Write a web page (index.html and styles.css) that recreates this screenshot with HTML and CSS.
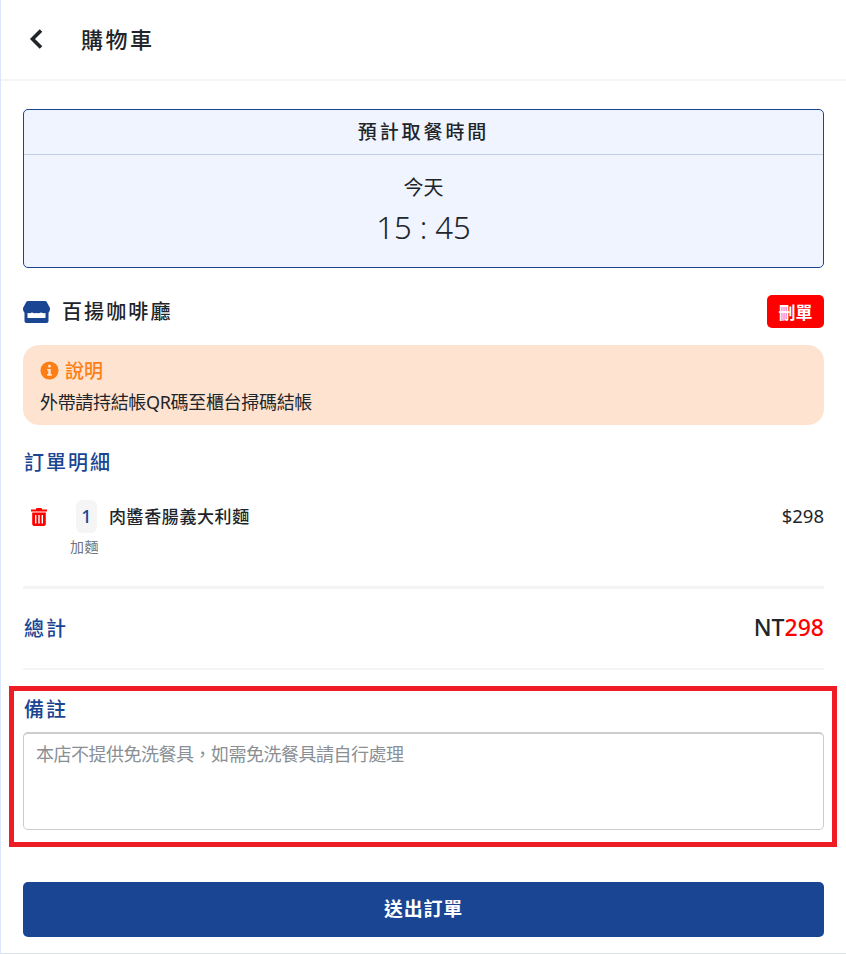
FILE: index.html
```html
<!DOCTYPE html>
<html lang="zh-Hant">
  <head>
    <meta charset="UTF-8" />
    <meta name="viewport" content="width=device-width, initial-scale=1.0" />
    <title>購物車</title>
    <link rel="stylesheet" href="styles.css">
  </head>
  <body>
    <div class="page">
      <header class="topbar">
        <svg class="back-icon" viewBox="0 0 14 20" width="14" height="20">
          <path d="M12 1.500 L3.500 10 L12 18.500" fill="none" stroke="#212529" stroke-width="3.600" />
        </svg>
        <h1 class="title">購物車</h1>
      </header>

      <main class="content">
        <section class="pickup">
          <div class="pickup-head">預計取餐時間</div>
          <div class="pickup-body">
            <div class="pickup-day">今天</div>
            <div class="pickup-time">15 : 45</div>
          </div>
        </section>

        <div class="shop-row">
          <svg class="shop-icon" viewBox="0 0 27 22" width="27" height="22">
            <path fill="#1a4592" fill-rule="evenodd" d="M5.500 0 H21.500 C23 0 23.600 .6 24 1.400 L27 7 V8 C27 10 25.500 11.800 25.500 11.800 V20 C25.500 21.200 24.700 22 23.500 22 H3.500 C2.300 22 1.500 21.200 1.500 20 V11.800 C1.500 11.800 0 10 0 8 V7 L3 1.400 C3.400 .6 4 0 5.500 0 Z M4.500 12 V17 H22.500 V12 Q20 12.500 18 11.500 Q16 12.500 13.500 12 Q11 12.500 9 11.500 Q7 12.500 4.500 12 Z" />
          </svg>
          <span class="shop-name">百揚咖啡廳</span>
          <button class="cancel-btn">刪單</button>
        </div>

        <div class="notice">
          <div class="notice-title">
            <svg viewBox="0 0 20 20" width="19" height="19">
              <circle cx="10" cy="10" r="9.500" fill="#fd7e14" />
              <rect x="8.600" y="4" width="2.800" height="2.800" rx="1" fill="#ffe3d1" />
              <path fill="#ffe3d1" d="M7.500 8.300 H11.300 V13.800 H12.500 V15.500 H7.500 V13.800 H8.700 V10 H7.500 Z" />
            </svg>
            <span>說明</span>
          </div>
          <div class="notice-text">外帶請持結帳QR碼至櫃台掃碼結帳</div>
        </div>

        <h2 class="section-title">訂單明細</h2>

        <div class="order-item">
          <svg class="trash-icon" viewBox="0 0 16 18" width="16" height="18">
            <path fill="#ff0000" d="M5.500 0 H10.500 L11.200 1.500 H16 V3.500 H0 V1.500 H4.800 Z" />
            <path fill="#ff0000" fill-rule="evenodd" d="M1.200 4.500 H14.800 V16 C14.800 17.200 14 18 12.800 18 H3.200 C2 18 1.200 17.200 1.200 16 Z M4 7 V15.500 H5.400 V7 Z M7.300 7 V15.500 H8.700 V7 Z M10.600 7 V15.500 H12 V7 Z" />
          </svg>
          <div class="qty">1</div>
          <div class="item-name">肉醬香腸義大利麵</div>
          <div class="item-price">$298</div>
        </div>
        <div class="item-option">加麵</div>

        <div class="total-row">
          <span class="section-title total-label">總計</span>
          <span class="total-price">NT<span class="red">298</span></span>
        </div>

        <div class="remark">
          <h2 class="section-title">備註</h2>
          <textarea class="remark-input" placeholder="本店不提供免洗餐具，如需免洗餐具請自行處理"></textarea>
        </div>

        <button class="submit-btn">送出訂單</button>
      </main>

      <div class="highlight"></div>
    </div>
  </body>
</html>
```

FILE: styles.css
```css
:root {
  --blue: #1a4592;
  --dark: #212529;
  --line: #f3f4f6;
}
* {
  box-sizing: border-box;
}
html,
body {
  margin: 0;
  height: 100%;
}
body {
  font-family: "Noto Sans", "Noto Sans CJK TC", sans-serif;
  color: var(--dark);
  background: #fff;
  overflow: hidden;
}

.page {
  position: relative;
  width: 846px;
  height: 954px;
  border-left: 1px solid #dbe7fb;
  border-bottom: 1px solid #dee2e6;
}

.topbar {
  display: flex;
  align-items: center;
  height: 81px;
  padding: 0 0 2px 28px;
  border-bottom: 2px solid var(--line);
}
.back-icon {
  margin-right: 39px;
}
.title {
  margin: -1px 0 0 -1px;
  font-size: 22px;
  font-weight: 500;
  letter-spacing: 2.500px;
}

.content {
  padding: 28px 22px 0 22px;
}

.pickup {
  height: 159px;
  border: 1px solid var(--blue);
  border-radius: 5px;
  background: #eff4ff;
  text-align: center;
}
.pickup-head {
  height: 45px;
  line-height: 45px;
  border-bottom: 1px solid #c0cfe6;
  font-size: 19px;
  font-weight: 500;
  letter-spacing: 2.900px;
}
.pickup-day {
  margin-top: 18px;
  font-size: 20px;
  line-height: 30px;
}
.pickup-time {
  font-size: 31px;
  font-weight: 300;
  line-height: 48px;
}

.shop-row {
  display: flex;
  align-items: center;
  height: 33px;
  margin-top: 27px;
}
.shop-name {
  margin-top: -2px;
  margin-left: 12px;
  font-size: 20px;
  font-weight: 500;
  letter-spacing: 2.100px;
}
.cancel-btn {
  margin-left: auto;
  width: 57px;
  height: 33px;
  border: none;
  border-radius: 5px;
  background: #ff0000;
  color: #fff;
  font-family: inherit;
  font-size: 17px;
  font-weight: 700;
  padding: 0;
}

.notice {
  height: 80px;
  margin-top: 17px;
  padding: 13px 17px;
  border-radius: 16px;
  background: #ffe3d1;
}
.notice-title {
  display: flex;
  align-items: center;
  gap: 6px;
  height: 24px;
  color: #fd7e14;
  font-size: 19px;
  font-weight: 500;
}
.notice-text {
  margin-top: 7px;
  font-size: 18px;
  line-height: 27px;
  letter-spacing: -0.330px;
}

.section-title {
  margin: 0 0 0 1px;
  color: var(--blue);
  font-size: 20px;
  font-weight: 500;
  line-height: 30px;
  letter-spacing: 2px;
}
.notice + .section-title {
  margin-top: 23px;
}
.total-label {
  margin-top: 3px;
}

.order-item {
  display: flex;
  align-items: center;
  height: 33px;
  margin-top: 22px;
  padding-left: 8px;
}
.trash-icon {
  margin-top: 1px;
}
.qty {
  width: 21px;
  height: 33px;
  margin-left: 29px;
  border-radius: 6px;
  background: #f5f5f5;
  color: var(--blue);
  font-size: 18px;
  font-weight: 500;
  line-height: 33px;
  text-align: center;
}
.item-name {
  margin-top: -2px;
  margin-left: 12px;
  font-size: 17px;
  font-weight: 500;
  letter-spacing: 0.600px;
}
.item-price {
  margin-left: auto;
  margin-top: -2px;
  font-size: 18.500px;
}
.item-option {
  margin: 3px 0 0 47px;
  color: #6c757d;
  font-size: 14px;
  line-height: 21px;
  letter-spacing: 0.500px;
}

.total-row {
  display: flex;
  align-items: center;
  justify-content: space-between;
  height: 84px;
  margin-top: 29px;
  padding-bottom: 3px;
  border-top: 3px solid var(--line);
  border-bottom: 2px solid var(--line);
}
.total-price {
  font-size: 23px;
  font-weight: 500;
}
.red {
  color: #ff0000;
}

.remark {
  margin-top: 25px;
}
.remark-input {
  display: block;
  width: 100%;
  height: 98px;
  margin-top: 7px;
  padding: 7px 12px;
  border: 1px solid #ccc;
  border-top-width: 2px;
  border-radius: 5px;
  font-family: inherit;
  font-size: 18px;
  line-height: 27px;
  letter-spacing: -0.500px;
  resize: none;
}
.remark-input::placeholder {
  color: #8a8f94;
}

.submit-btn {
  display: block;
  width: 100%;
  height: 55px;
  margin-top: 52px;
  padding: 0 0 3px;
  border: none;
  border-radius: 5px;
  background: var(--blue);
  color: #fff;
  font-family: inherit;
  font-size: 19px;
  font-weight: 700;
  letter-spacing: 0.700px;
}

/* annotation box round the remark field */
.highlight {
  position: absolute;
  left: 8px;
  top: 686px;
  width: 828px;
  height: 161px;
  border: 5px solid #ee1c25;
  pointer-events: none;
}
```
